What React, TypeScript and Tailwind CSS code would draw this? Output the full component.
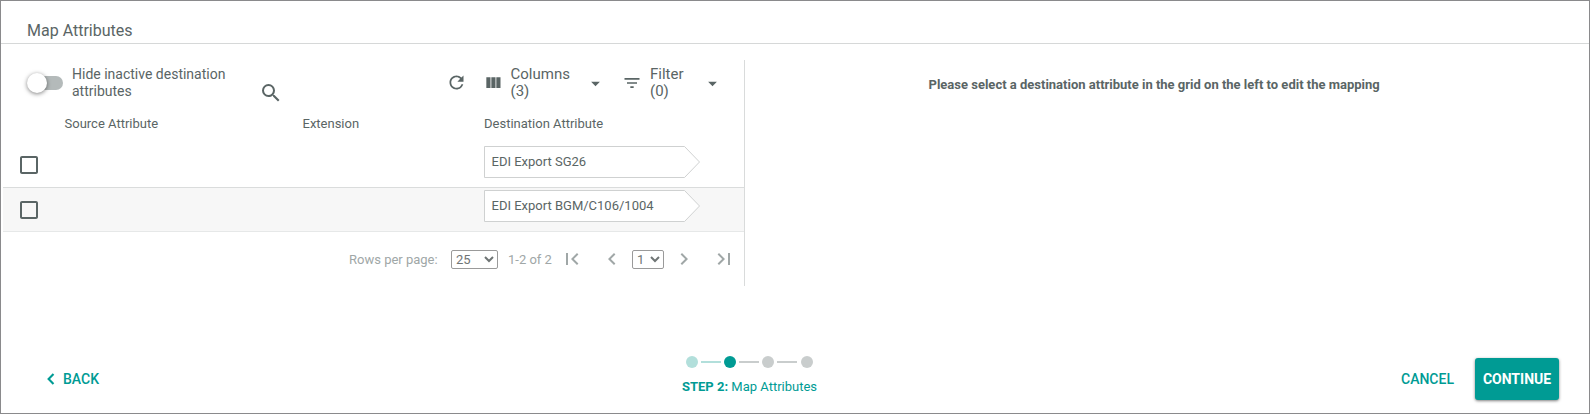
import React from "react";
import {
  MdArrowDropDown,
  MdCheckBoxOutlineBlank,
  MdChevronLeft,
  MdChevronRight,
  MdFilterList,
  MdFirstPage,
  MdLastPage,
  MdRefresh,
  MdSearch,
} from "react-icons/md";

function ColumnsIcon() {
  return (
    <svg viewBox="0 0 24 24" className="size-[20px] fill-current">
      <path d="M10 18h5V5h-5v13zm-6 0h5V5H4v13zM16 5v13h5V5h-5z" />
    </svg>
  );
}

function BackIcon() {
  return (
    <svg viewBox="0 0 22 22" className="mr-[1px] size-[22px]" fill="none" stroke="currentColor" strokeWidth="2.1">
      <path d="M13.5 6L8.6 11L13.5 16" />
    </svg>
  );
}

function AttributeTag({ label }: { label: string }) {
  return (
    <div className="relative flex h-8 w-[216px] items-center pl-[7.5px]">
      <svg viewBox="0 0 216 32" className="absolute inset-0 h-8 w-[216px]" fill="#fff" stroke="#cfd1d1">
        <path d="M0.5 0.5H200.5L215.5 16L200.5 31.5H0.5Z" />
      </svg>
      <span className="relative text-[13px] leading-4">{label}</span>
    </div>
  );
}

const dots = ["bg-[#b2dfdb]", "bg-[#009b94]", "bg-[#c9cdcd]", "bg-[#c9cdcd]"];
const lines = ["mx-[3px] bg-[#b2dfdb]", "mx-[3px] bg-[#c9cdcd]", "ml-[3px] mr-[4px] bg-[#c9cdcd]"];

export default function App() {
  return (
    <div className="flex h-[414px] w-[1590px] flex-col border border-[#8a8a8c] bg-white font-['Roboto',sans-serif] text-[#5a6565]">
      <header className="h-[43px] border-b border-[#d6d8d8] pt-[18px] pl-[26px] text-[16px] leading-6">Map Attributes</header>

      <main className="flex h-[242px] pt-4 pl-[2px]">
        <section className="flex h-[226px] w-[742px] flex-col border-r border-[#d9dbdb]">
          <div className="flex h-[47px] shrink-0 pt-[6px] pl-6 text-[14px] leading-[17px]">
            <div className="mt-[7px] flex h-[20px] w-[36px] items-center">
              <div className="z-10 size-5 shrink-0 rounded-full bg-white shadow-[0_1px_4px_rgba(0,0,0,0.5)]" />
              <div className="-ml-[18px] h-[14px] w-[34px] shrink-0 rounded-full bg-[#b4baba]" />
            </div>
            <div className="ml-[9px] w-[160px]">Hide inactive destination attributes</div>
            <MdSearch className="mt-[15px] ml-[27px] size-6 shrink-0" />
            <MdRefresh className="mt-[6px] ml-[163px] size-[21px] shrink-0" />
            <div className="mt-[7px] ml-[16px] shrink-0"><ColumnsIcon /></div>
            <div className="ml-[7.5px] w-[70px] shrink-0 text-[15px]">Columns<br />(3)</div>
            <MdArrowDropDown className="mt-[7px] ml-[4.5px] size-[21px] shrink-0" />
            <MdFilterList className="mt-[7px] ml-[16px] size-[20px] shrink-0" />
            <div className="ml-[8px] w-[50px] shrink-0 text-[15px]">Filter<br />(0)</div>
            <MdArrowDropDown className="mt-[7px] ml-[2px] size-[21px] shrink-0" />
          </div>

          <div className="flex h-[37px] shrink-0 pt-[9px] pl-[61.5px] text-[13px] leading-4">
            <div className="w-[238px]">Source Attribute</div>
            <div className="w-[181.5px]">Extension</div>
            <div>Destination Attribute</div>
          </div>

          <div className="flex h-[44px] shrink-0 border-b border-[#dadcdc] pt-[2px] pl-[14px]">
            <MdCheckBoxOutlineBlank className="mt-[7px] mr-[443px] size-6" />
            <AttributeTag label="EDI Export SG26" />
          </div>
          <div className="flex h-[44px] shrink-0 border-b border-[#e6e8e8] bg-[#f7f7f7] pt-[2px] pl-[14px]">
            <MdCheckBoxOutlineBlank className="mt-[8px] mr-[443px] size-6" />
            <AttributeTag label="EDI Export BGM/C106/1004" />
          </div>

          <div className="flex h-[54px] shrink-0 items-center pt-[1px] pl-[346px] text-[13px] text-[#a0a7a7]">
            <span className="w-[102px] shrink-0">Rows per page:</span>
            <select defaultValue="25" className="h-[19px] w-[47px] shrink-0 appearance-auto rounded-[2px] border border-[#9a9a9a] bg-white text-[13px] text-[#6f7575]">
              <option>25</option>
            </select>
            <span className="ml-[10px] w-[50px] shrink-0">1-2 of 2</span>
            <MdFirstPage className="mb-[1px] ml-[2px] size-6 shrink-0" />
            <MdChevronLeft className="mb-[1px] ml-[16px] size-6 shrink-0" />
            <select defaultValue="1" className="ml-[8px] h-[19px] w-[32px] shrink-0 appearance-auto rounded-[2px] border border-[#9a9a9a] bg-white text-[13px] text-[#6f7575]">
              <option>1</option>
            </select>
            <MdChevronRight className="mb-[1px] ml-[8px] size-6 shrink-0" />
            <MdLastPage className="mb-[1px] ml-[16px] size-6 shrink-0" />
          </div>
        </section>

        <aside className="flex-1 pt-[17px] pl-[183.5px] text-[13px] leading-4 font-bold">
          Please select a destination attribute in the grid on the left to edit the mapping
        </aside>
      </main>

      <footer className="flex flex-1 pt-[70px] text-[14px] font-medium text-[#009b94]">
        <button className="mt-[13px] ml-[39px] flex h-5 w-[80px] items-center">
          <BackIcon />BACK
        </button>
        <div className="ml-[562px] w-[138px] shrink-0">
          <div className="flex h-3 items-center pl-[4px]">
            {dots.map((dot, i) => (
              <React.Fragment key={i}>
                <span className={`size-3 shrink-0 rounded-full ${dot}`} />
                {i < 3 && <span className={`h-[2px] w-5 shrink-0 ${lines[i]}`} />}
              </React.Fragment>
            ))}
          </div>
          <div className="mt-[11px] text-[13px] leading-4 font-normal"><b>STEP 2:</b> Map Attributes</div>
        </div>
        <button className="mt-[13px] ml-[581px] h-5 w-[54px] text-left">CANCEL</button>
        <button className="mt-[2px] ml-[20px] h-[42px] w-[84px] rounded-[3px] bg-[#009b94] text-[14px] font-bold text-white shadow-[0_1px_3px_rgba(0,0,0,0.5)]">CONTINUE</button>
      </footer>
    </div>
  );
}
